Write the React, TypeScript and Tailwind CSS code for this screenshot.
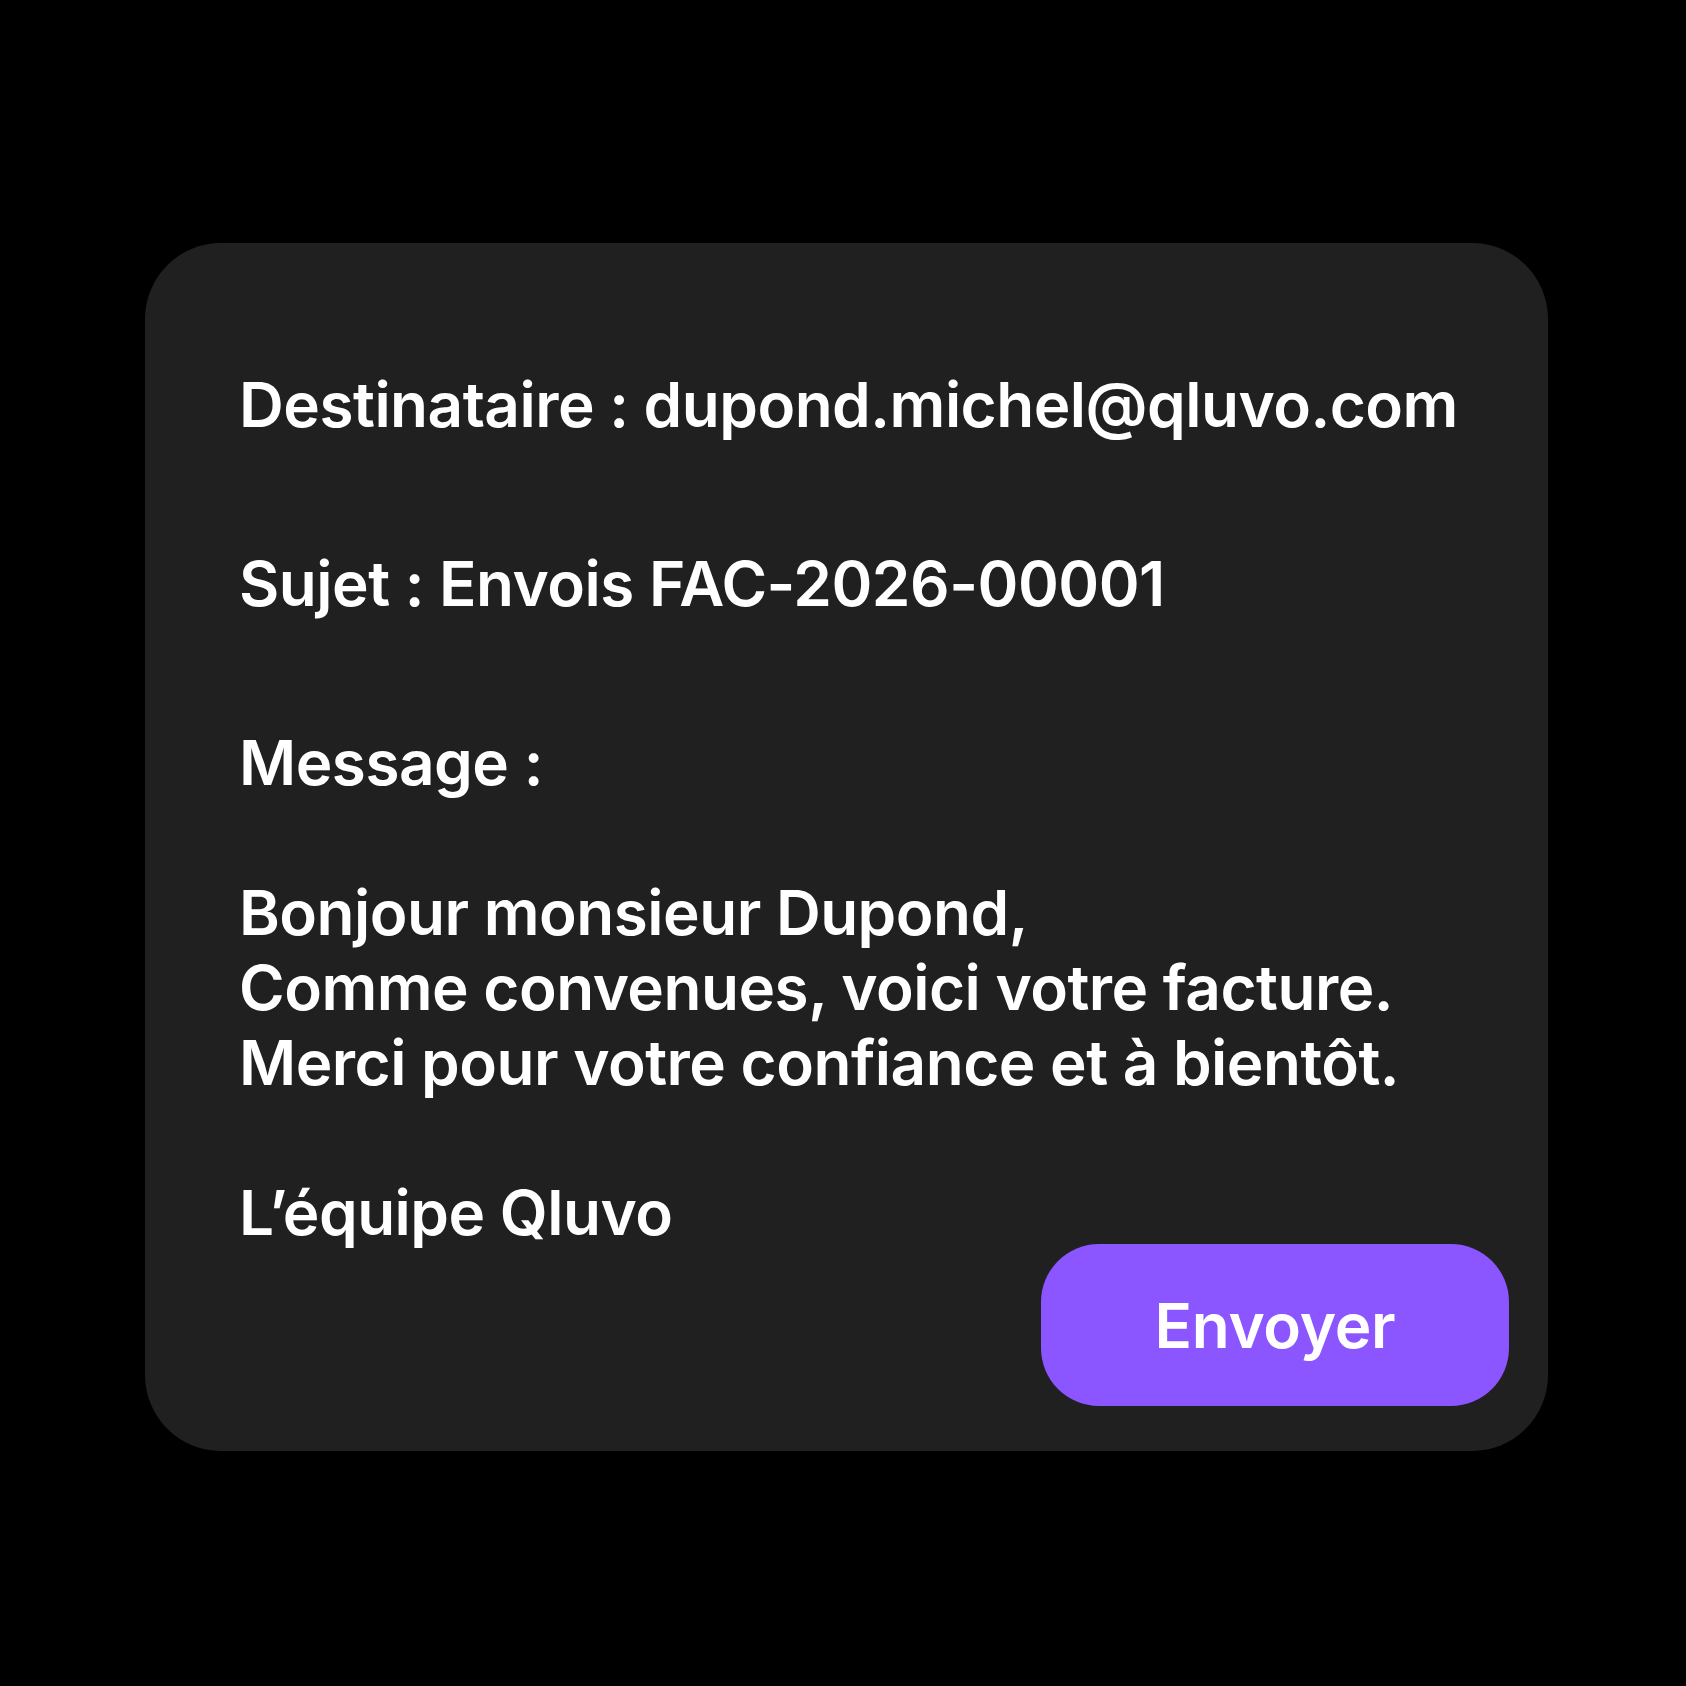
import React from 'react';

const App: React.FC = () => {
  return (
    <div className="min-h-[1686px] w-full bg-black pt-[243px] pl-[145px] font-['Inter','Noto_Sans',sans-serif]">
      <div className="w-[1403px] h-[1208px] bg-[#202020] rounded-[76px] pt-[124px] pl-[94px] pr-[39px] flex flex-col text-white font-semibold text-[62px] leading-[75px] tracking-[-0.5px]">
        <p>Destinataire : dupond.michel@qluvo.com</p>
        <p className="mt-[104px]">Sujet : Envois FAC-2026-00001</p>
        <p className="mt-[104px]">Message :</p>
        <div className="mt-[75px]">
          <p>Bonjour monsieur Dupond,</p>
          <p>Comme convenues, voici votre facture.</p>
          <p>Merci pour votre confiance et à bientôt.</p>
        </div>
        <p className="mt-[75px]">L’équipe Qluvo</p>
        <div className="flex justify-end -mt-[6px]">
          <button className="w-[468px] h-[162px] rounded-[58px] bg-[#8b55ff] text-white font-semibold text-[62px] tracking-[-0.3px]">
            Envoyer
          </button>
        </div>
      </div>
    </div>
  );
};

export default App;
